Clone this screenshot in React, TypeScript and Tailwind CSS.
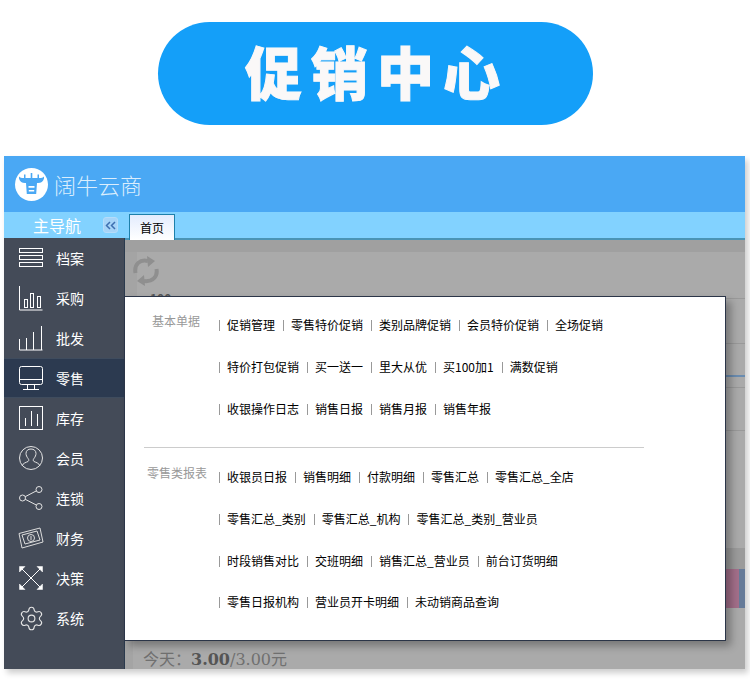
import React from "react";
import { Settings } from "lucide-react";

const FONT = "font-['Noto_Sans_CJK_SC','Liberation_Sans',sans-serif]";

interface IconProps {
    className?: string
}

const svgBase = {
    width: 26,
    height: 26,
    viewBox: "0 0 26 26",
    fill: "none",
    stroke: "white",
    strokeWidth: 1,
};

const FileIcon = () => (
    <svg {...svgBase}>
        <rect x="1.5" y="3.5" width="23" height="4" />
        <rect x="1.5" y="10.5" width="23" height="4" />
        <rect x="1.5" y="17.5" width="23" height="4" />
    </svg>
);

const PurchaseIcon = () => (
    <svg {...svgBase}>
        <path d="M1.5 1v24h23" />
        <rect x="6.5" y="14.5" width="3" height="8" />
        <rect x="12.5" y="8.5" width="3" height="14" />
        <rect x="19.5" y="11.5" width="3" height="11" />
    </svg>
);

const WholesaleIcon = () => (
    <svg {...svgBase}>
        <path d="M1.5 14v11h23M8.5 25V13M15.5 25V7M23.5 25V1" />
    </svg>
);

const MonitorIcon = () => (
    <svg {...svgBase}>
        <rect x="1.5" y="1.5" width="23" height="18" rx="2" />
        <path d="M1.5 14.5h23M9.5 20v4M16.5 20v4M5 24.5h16" />
    </svg>
);

const StockIcon = () => (
    <svg {...svgBase}>
        <rect x="1.5" y="1.5" width="23" height="23" />
        <path d="M7.5 21v-8M13.5 21V6M19.5 21V9" />
    </svg>
);

const MemberIcon = () => (
    <svg {...svgBase} stroke="#e4e4e4">
        <circle cx="13" cy="13" r="11.5" />
        <path d="M4 21c1-3 4-3.500 6-4.500 1-.6 1-1.800.2-2.800C8.800 12 8 10 8 8.500 8 5.500 10.200 4 13 4s5 1.500 5 4.500c0 1.500-.8 3.500-2.200 5.200-.8 1-.8 2.200.2 2.800 2 1 5 1.500 6 4.500" />
    </svg>
);

const ShareIcon = () => (
    <svg {...svgBase} stroke="#e4e4e4">
        <circle cx="4.500" cy="13" r="3" />
        <circle cx="21" cy="4.500" r="3" />
        <circle cx="21" cy="21.500" r="3" />
        <path d="M7.200 11.700 18.300 5.900M7.200 14.300 18.300 20" />
    </svg>
);

const MoneyIcon = () => (
    <svg {...svgBase} stroke="#dcdcdc">
        <path d="M1 8.500 22 3l3 14-21 6z" />
        <path d="M4 10l15-4 3 9-15 4z" />
        <circle cx="13" cy="13" r="3.500" />
        <path d="M13 11v4" />
    </svg>
);

const ArrowsIcon = () => (
    <svg {...svgBase}>
        <path d="M4 4l18 18M22 4 4 22" />
        <path d="M1.500 1.500h5.500L1.500 7zM24.500 1.500V7L19 1.500zM1.500 24.500V19L7 24.500zM24.500 24.500H19L24.500 19z" fill="white" strokeWidth="0.5" />
    </svg>
);

const menus = [
    {name: "档案", icon: <FileIcon />},
    {name: "采购", icon: <PurchaseIcon />},
    {name: "批发", icon: <WholesaleIcon />},
    {name: "零售", icon: <MonitorIcon />, active: true},
    {name: "库存", icon: <StockIcon />},
    {name: "会员", icon: <MemberIcon />},
    {name: "连锁", icon: <ShareIcon />},
    {name: "财务", icon: <MoneyIcon />},
    {name: "决策", icon: <ArrowsIcon />},
    {name: "系统", icon: <Settings size={27} strokeWidth={1} color="#e4e4e4" />},
];

const basicRows = [
    ["促销管理", "零售特价促销", "类别品牌促销", "会员特价促销", "全场促销"],
    ["特价打包促销", "买一送一", "里大从优", "买100加1", "满数促销"],
    ["收银操作日志", "销售日报", "销售月报", "销售年报"],
];

const reportRows = [
    ["收银员日报", "销售明细", "付款明细", "零售汇总", "零售汇总_全店"],
    ["零售汇总_类别", "零售汇总_机构", "零售汇总_类别_营业员"],
    ["时段销售对比", "交班明细", "销售汇总_营业员", "前台订货明细"],
    ["零售日报机构", "营业员开卡明细", "未动销商品查询"],
];

function LinkRows({rows}: {rows: string[][]}) {
    return (
        <div className="flex flex-col">
            {rows.map((row) => (
                <div className="flex h-[42px] items-center nth-[4]:-mt-px" key={row[0]}>
                    {row.map((item) => (
                        <React.Fragment key={item}>
                            <span className="h-[11px] w-px bg-[#999999]" />
                            <a className="ml-[7px] mr-[8px] text-xs text-black">{item}</a>
                        </React.Fragment>
                    ))}
                </div>
            ))}
        </div>
    );
}

function Popup() {
    return (
        <div className="absolute left-[-1px] top-[56px] z-20 h-[345px] w-[602px] border border-[#2b3548] bg-white pt-[7px] shadow-[5px_5px_8px_rgba(0,0,0,0.3)]">
            <div className="flex">
                <div className="w-[94px] pl-[27px] text-xs leading-[34px] text-[#999999]">基本单据</div>
                <LinkRows rows={basicRows} />
            </div>
            <div className="mb-[8px] ml-[19px] mt-[17px] h-px w-[500px] bg-[#cccccc]" />
            <div className="flex">
                <div className="w-[94px] pl-[22px] text-xs leading-[34px] text-[#999999]">零售类报表</div>
                <LinkRows rows={reportRows} />
            </div>
        </div>
    );
}

function RefreshIcon({className}: IconProps) {
    return (
        <svg className={className} width="26" height="32" viewBox="0 0 26 32" fill="none">
            <path d="M2.500 18C1 9 7 4 15 6" stroke="#8f8f8f" strokeWidth="4" />
            <path d="M14 1l8 5-7 6z" fill="#8f8f8f" />
            <path d="M23.500 14c1.500 8-4.500 13-12.500 12" stroke="#8f8f8f" strokeWidth="4" />
            <path d="M12 31l-8-5 7-6z" fill="#8f8f8f" />
        </svg>
    );
}

export default function App() {
    return (
        <div className={`h-[695px] w-[750px] overflow-hidden bg-white pt-[22px] ${FONT}`}>
            <div className="ml-[158px] flex h-[103px] w-[435px] items-center justify-center rounded-[52px] bg-[#149ff9] pb-[6px]">
                <span className="pl-[3px] text-[57px] font-black leading-none tracking-[9px] text-[#faf8f8] [-webkit-text-stroke:1px_#faf8f8]">促销中心</span>
            </div>

            <div className="ml-[4px] mt-[31px] flex h-[513px] w-[741px] flex-col bg-[#aaaaaa] shadow-[3px_4px_6px_rgba(0,0,0,0.2)]">
                <div className="flex h-[56px] items-center gap-[6px] bg-[#4aa8f4] pl-[11px]">
                    <svg width="33" height="33" viewBox="0 0 33 33" fill="#4aa8f4">
                        <circle cx="16.500" cy="16.500" r="16.500" fill="white" />
                        <rect x="9" y="6.500" width="1.500" height="3.500" />
                        <rect x="15.700" y="5" width="1.600" height="5" />
                        <rect x="22.500" y="6.500" width="1.500" height="3.500" />
                        <path d="M4 8.500c1 1 2.500 1.500 4.500 1.500h16c2 0 3.500-.5 4.500-1.500v2c-.8 3-3 4.500-6 4.500H10c-3 0-5.200-1.500-6-4.500z" />
                        <path fillRule="evenodd" d="M11 15h11l-.8 11H11.800zM13.500 18v1.800h6V18zM13.800 22v1.600h5.400V22z" />
                    </svg>
                    <span className="text-[22px] font-light text-[#dbeefd]">阔牛云商</span>
                </div>

                <div className="relative flex h-[26px] items-center bg-[#82d2ff]">
                    <span className="ml-[29px] w-[70px] text-base text-white">主导航</span>
                    <span className="flex h-[16px] w-[15px] items-center justify-center rounded-[3px] border border-[#b5dcfa] bg-[#a6d4f8]">
                        <svg width="11" height="9" viewBox="0 0 11 9" fill="none" stroke="#3e6fb0" strokeWidth="1.500">
                            <path d="M5 1 1.500 4.500 5 8M10 1 6.500 4.500 10 8" />
                        </svg>
                    </span>
                    <span className="absolute left-[125px] top-[2px] z-10 flex h-[26px] w-[46px] items-center justify-center border border-b-0 border-[#1d80ab] bg-gradient-to-b from-[#e3ecfd] to-white text-xs text-black">
                        首页
                    </span>
                </div>

                <div className="flex flex-1">
                    <div className="w-[121px] border-r border-[#2b3a4d] bg-[#444b58]">
                        {menus.map((menu) => (
                            <div
                                key={menu.name}
                                className={`flex h-[40px] items-center ${menu.active ? "border-y border-[#3f4c5e] bg-[#2c3a50]" : ""}`}
                            >
                                <span className="flex w-[52px] justify-center pl-[2px]">{menu.icon}</span>
                                <span className="text-sm text-white">{menu.name}</span>
                            </div>
                        ))}
                    </div>

                    <div className="relative flex flex-1 flex-col border-t-[2px] border-[#4a94b5]">
                        <div className="h-[12px] bg-[#a0a0a0]" />
                        <div className="h-[46px] border-l-[12px] border-[#a4a4a4]">
                            <RefreshIcon className="ml-[-4px] mt-[3px]" />
                            <div className="ml-[13px] mt-[5px] text-xs font-bold leading-3 text-[#555555]">100</div>
                        </div>
                        <div className="h-[45px] border-t border-[#999999]" />
                        <div className="relative h-[44px] border-t border-[#999999]" />
                        <div className="relative h-[43px] border-t border-[#999999]">
                            <div className="absolute right-0 top-[-13px] h-[2px] w-[30px] bg-[#6a8cb0]" />
                        </div>
                        <div className="h-[118px] border-t border-[#999999]" />
                        <div className="h-[21px] bg-[#9b9b9b]" />
                        <div className="flex h-[39px] justify-end">
                            <div className="w-[14px] bg-[#a36f8a]" />
                            <div className="w-[6px] bg-[#667b99]" />
                        </div>
                        <div className="flex-1" />
                        <div className="h-[28px] border-l-[8px] border-[#a4a4a4] pl-[10px] pt-[10px] font-['DejaVu_Serif','Noto_Sans_CJK_SC',serif] text-base leading-[18px] text-[#707070]">
                            今天：<b className="text-[#555555]">3.00</b>/3.00元
                        </div>
                        <Popup />
                    </div>
                </div>
            </div>
        </div>
    );
}
